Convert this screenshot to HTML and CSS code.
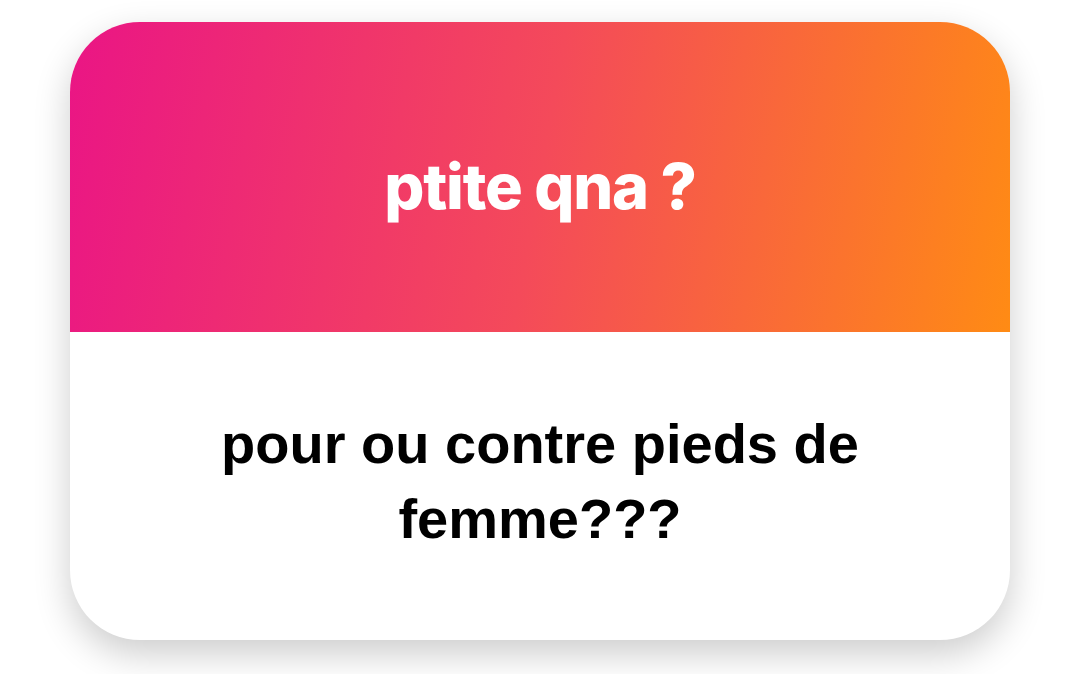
FILE: index.html
```html
<!DOCTYPE html>
<html>
<head>
<meta charset="utf-8">
<link rel="stylesheet" href="styles.css">
</head>
<body>
<div class="page">
  <div class="card">
    <div class="card-head">
      <h1 class="title">ptite qna ?</h1>
    </div>
    <div class="card-body">
      <p class="question">pour ou contre pieds de<br>femme???</p>
    </div>
  </div>
</div>
</body>
</html>
```
FILE: styles.css
```css
html, body {
  margin: 0;
  padding: 0;
  background: #ffffff;
}
.page {
  width: 1080px;
  height: 674px;
  padding: 22px 0 0 70px;
  box-sizing: border-box;
  overflow: hidden;
}
.card {
  width: 940px;
  height: 618px;
  border-radius: 70px;
  overflow: hidden;
  background: #ffffff;
  box-shadow: 0 14px 36px rgba(0, 0, 0, 0.2);
  display: flex;
  flex-direction: column;
}
.card-head {
  height: 310px;
  flex: none;
  background: linear-gradient(100deg, #ea1585 0%, #f44a5a 50%, #ff8b14 100%);
  display: flex;
  align-items: center;
  justify-content: center;
  padding-top: 18px;
  box-sizing: border-box;
}
.title {
  margin: 0;
  color: #ffffff;
  font-family: Inter, "Noto Sans", sans-serif;
  font-weight: 800;
  font-size: 63px;
  letter-spacing: -1.2px;
}
.card-body {
  flex: 1;
  display: flex;
  align-items: center;
  justify-content: center;
  padding-bottom: 10px;
}
.question {
  margin: 0;
  text-align: center;
  color: #000000;
  font-family: "Liberation Sans", Arial, sans-serif;
  font-weight: 700;
  font-size: 56px;
  line-height: 75px;
}
```
